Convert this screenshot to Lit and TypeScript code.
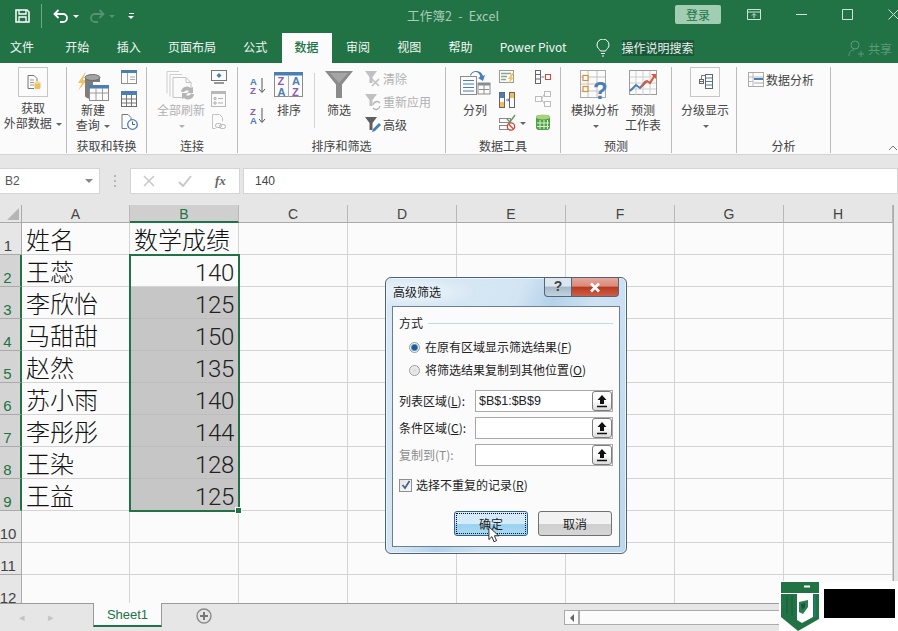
import { LitElement, html, css, nothing, TemplateResult } from 'lit';
import { customElement } from 'lit/decorators.js';

const G = '#217346';
const B = '#4a7fb5';
const P = '#8a5bb0';

// ribbon + chrome icons
const icons = {
  external: html`<svg class="ic" width="30" height="30" viewBox="0 0 30 30" fill="none">
    <rect x=".5" y=".5" width="29" height="29" fill="#fbfbfb" stroke="#c6c6c6" />
    <path d="M10 8.500h6l3 3v3M10 8.500v13h6" stroke="#777" />
    <path d="M12 13h4M12 15.500h4M12 18h4" stroke="#999" />
    <rect x="16.500" y="15" width="6" height="7" rx="1.500" fill="#edc05f" />
    <ellipse cx="19.500" cy="15.500" rx="3" ry="1.200" fill="#f6dc9c" />
  </svg>`,
  query: html`<svg class="ic" width="34" height="34" viewBox="0 0 34 34" fill="none">
    <path d="M10 1 2 13h4l-4 8 9-11H7z" fill="#f1c265" />
    <path d="M9 8v18c0 1.500 3 3 8 3V12h7V8z" fill="#7d7d7d" />
    <ellipse cx="16.500" cy="7.500" rx="7.500" ry="3" fill="#a3a3a3" stroke="#6b6b6b" />
    <rect x="13.500" y="15.500" width="19" height="15" fill="#fbfbfb" stroke="#8c8c8c" />
    <rect x="13" y="15" width="20" height="3.500" fill="${B}" />
    <path d="M20 18v12M26.500 18v12M14 23h18" stroke="#9c9c9c" />
  </svg>`,
  tableA: html`<svg class="ic" width="16" height="14" viewBox="0 0 16 14" fill="none">
    <rect x=".5" y=".5" width="15" height="13" fill="#fbfbfb" stroke="#8c8c8c" />
    <rect width="16" height="3" fill="${B}" />
    <path d="M6.500 3v10M9 7h5M9 9.500h5" stroke="#a8a8a8" />
  </svg>`,
  tableB: html`<svg class="ic" width="16" height="16" viewBox="0 0 16 16" fill="none">
    <rect x=".5" y=".5" width="15" height="15" fill="#fbfbfb" stroke="#6a6a6a" />
    <rect width="16" height="4" fill="${B}" />
    <path d="M5.500 4v11M10.500 4v11M1 8h14M1 12h14" stroke="#777" />
  </svg>`,
  recent: html`<svg class="ic" width="17" height="16" viewBox="0 0 17 16" fill="none">
    <path d="M1 .5h6l3 3v3M1 .5v14h5" stroke="#777" />
    <circle cx="11.500" cy="10.500" r="4.800" fill="#fff" stroke="${B}" stroke-width="1.300" />
    <path d="M11.500 7.500v3h2.500" stroke="#555" />
  </svg>`,
  refresh: html`<svg class="ic" width="30" height="32" viewBox="0 0 30 32" fill="none">
    <path d="M1 1.500h12M1 1.500v22M4 4.500h12M4 4.500v22" stroke="#cfcfcf" />
    <path d="M7 7.500h13l5 5v15H7z" fill="#fbfbfb" stroke="#c4c4c4" />
    <path d="M20 7.500v5h5" stroke="#c4c4c4" />
    <path d="M15 22a6 6 0 0 1 10-4l2-1v6h-6l2-2a3.500 3.500 0 0 0-5 1zM28 24a6 6 0 0 1-10 4l-2 1v-6h6l-2 2a3.500 3.500 0 0 0 5-1z" fill="#b5b5b5" />
  </svg>`,
  conn: html`<svg class="ic" width="16" height="14" viewBox="0 0 16 14" fill="none">
    <rect x=".5" y=".5" width="15" height="10" fill="#fbfbfb" stroke="#777" />
    <path d="M3 13h10" stroke="#777" stroke-width="1.500" />
    <path d="M8 3l2.500 2.500L8 8 5.500 5.500z" fill="${B}" />
  </svg>`,
  props: html`<svg class="ic" width="15" height="16" viewBox="0 0 15 16" fill="none">
    <rect x=".5" y=".5" width="14" height="15" fill="#fbfbfb" stroke="#b8b8b8" />
    <rect width="15" height="3" fill="#b8b8b8" />
    <path d="M3 6.500h2v2H3zM3 11h2v2H3zM7 7.500h5M7 12h5" stroke="#b0b0b0" />
  </svg>`,
  links: html`<svg class="ic" width="15" height="16" viewBox="0 0 15 16" fill="none">
    <path d="M1.500.5h7l3 3v4M1.500.5v14h3" stroke="#c4c4c4" />
    <rect x="4.500" y="9.500" width="6" height="4" rx="2" stroke="#b5b5b5" />
    <rect x="8.500" y="10.500" width="6" height="4" rx="2" stroke="#b5b5b5" />
  </svg>`,
  sortAZ: html`<svg class="ic" width="16" height="17" viewBox="0 0 16 17" fill="none">
    <text x="0" y="8" class="az" fill="${B}">A</text>
    <text x="0" y="16.500" class="az" fill="${P}">Z</text>
    <path d="M12 1v14M9 12l3 3.500 3-3.500" stroke="#555" />
  </svg>`,
  sortZA: html`<svg class="ic" width="16" height="17" viewBox="0 0 16 17" fill="none">
    <text x="0" y="8" class="az" fill="${P}">Z</text>
    <text x="0" y="16.500" class="az" fill="${B}">A</text>
    <path d="M12 1v14M9 12l3 3.500 3-3.500" stroke="#555" />
  </svg>`,
  sort: html`<svg class="ic" width="30" height="26" viewBox="0 0 30 26" fill="none">
    <rect x=".5" y=".5" width="28" height="24" fill="#fbfbfb" stroke="#8c8c8c" />
    <rect width="29" height="3.500" fill="${B}" />
    <path d="M14.500 3v22" stroke="#aaa" />
    <text x="3.500" y="13" class="az2" fill="${P}">Z</text>
    <text x="3.500" y="24" class="az2" fill="${B}">A</text>
    <text x="18" y="13" class="az2" fill="${B}">A</text>
    <text x="18" y="24" class="az2" fill="${P}">Z</text>
  </svg>`,
  funnel: html`<svg class="ic" width="28" height="28" viewBox="0 0 28 28" fill="none">
    <path d="M0 0h28L17 13.500V27h-6V13.500z" fill="#8b8b8b" />
    <path d="M5 2h18l-9 10z" fill="#a5a5a5" />
  </svg>`,
  clear: html`<svg class="ic" width="16" height="16" viewBox="0 0 16 16" fill="none">
    <path d="M0 0h12L7.500 6v6h-3V6z" fill="#c0c0c0" />
    <path d="M7 8l7 7M14 8l-7 7" stroke="#c0c0c0" stroke-width="1.600" />
  </svg>`,
  reapply: html`<svg class="ic" width="16" height="16" viewBox="0 0 16 16" fill="none">
    <path d="M0 0h12L7.500 6v6h-3V6z" fill="#c0c0c0" />
    <path d="M8 11a4 4 0 0 1 7-2M15 12a4 4 0 0 1-7 2" stroke="#b5b5b5" stroke-width="1.400" />
  </svg>`,
  advanced: html`<svg class="ic" width="16" height="16" viewBox="0 0 16 16" fill="none">
    <path d="M0 0h12L7.500 6v7h-3V6z" fill="#5f5f5f" />
    <path d="M7 15l1-3 6-6 2 2-6 6z" fill="${B}" />
  </svg>`,
  split: html`<svg class="ic" width="30" height="26" viewBox="0 0 30 26" fill="none">
    <rect x=".5" y="6.500" width="16" height="18" fill="#fbfbfb" stroke="#8c8c8c" />
    <path d="M3 10.500h11M3 14h11M3 17.500h11M3 21h11" stroke="${B}" />
    <rect x="18" y="13" width="12" height="11" fill="#fbfbfb" stroke="#8c8c8c" />
    <rect x="18" y="13" width="12" height="2.500" fill="#8c8c8c" />
    <path d="M24 15v9M19 19.500h10" stroke="#8c8c8c" />
    <path d="M10 5a7 7 0 0 1 13 1l2-1-2 6-5-3 2-1a4.500 4.500 0 0 0-9-1z" fill="${B}" />
  </svg>`,
  flash: html`<svg class="ic" width="16" height="15" viewBox="0 0 16 15" fill="none">
    <rect x=".5" y=".5" width="14" height="12" fill="#fbfbfb" stroke="#999" />
    <path d="M2 3.500h10M2 6.500h6M2 9.500h5" stroke="#8ca88a" stroke-width="1.400" />
    <path d="M13 3l-4 6h2.500L9 14l6-6.500h-2.500L15 3z" fill="#f1c265" />
  </svg>`,
  dup: html`<svg class="ic" width="16" height="16" viewBox="0 0 16 16" fill="none">
    <rect x=".5" y=".5" width="5" height="15" fill="#fbfbfb" stroke="#666" />
    <rect x="1" y="1" width="4" height="5" fill="${B}" />
    <rect x="1" y="10" width="4" height="5" fill="#efbe5b" />
    <rect x="10.500" y=".5" width="5" height="15" fill="#fbfbfb" stroke="#666" />
    <rect x="11" y="1" width="4" height="5" fill="#efbe5b" />
    <path d="M7 8h3M9 6.500 10 8 9 9.500" stroke="${B}" />
  </svg>`,
  valid: html`<svg class="ic" width="17" height="16" viewBox="0 0 17 16" fill="none">
    <rect x=".5" y="3.500" width="11" height="4" fill="#fbfbfb" stroke="#888" />
    <rect x=".5" y="10.500" width="8" height="4" fill="#fbfbfb" stroke="#888" />
    <path d="M8 4l3 3 5-7" stroke="#5a9e5e" stroke-width="1.400" />
    <circle cx="12" cy="11.500" r="3.700" fill="#fff" stroke="#d0483a" stroke-width="1.300" />
    <path d="M9.500 9l5 5" stroke="#d0483a" stroke-width="1.300" />
  </svg>`,
  consol: html`<svg class="ic" width="16" height="14" viewBox="0 0 16 14" fill="none">
    <rect x=".5" y=".5" width="5" height="13" fill="#fbfbfb" stroke="#666" />
    <path d="M1 4.500h4M1 9h4" stroke="#666" />
    <path d="M6.500 7h3" stroke="${B}" />
    <rect x="10.500" y="4.500" width="5" height="5" stroke="#d0483a" />
  </svg>`,
  rel: html`<svg class="ic" width="16" height="16" viewBox="0 0 16 16" fill="none">
    <rect x=".5" y="5.500" width="6" height="5" stroke="#bcbcbc" />
    <rect x="9.500" y=".5" width="6" height="5" stroke="#bcbcbc" />
    <rect x="9.500" y="10.500" width="6" height="5" stroke="#bcbcbc" />
    <path d="M6.500 8 9.500 3M6.500 8l3 5" stroke="#bcbcbc" />
  </svg>`,
  pivot: html`<svg class="ic" width="16" height="16" viewBox="0 0 16 16" fill="none">
    <rect x="1" y="1" width="14" height="15" rx="3" fill="#4fa24b" />
    <ellipse cx="8" cy="3" rx="7" ry="2.500" fill="#a7d37f" />
    <path d="M5 6v9M9 6v9M12.500 6v9M2 9h12M2 12.500h12" stroke="#dff0cf" />
  </svg>`,
  whatif: html`<svg class="ic" width="30" height="30" viewBox="0 0 30 30" fill="none">
    <rect x=".5" y=".5" width="25" height="27" fill="#fbfbfb" stroke="#aaa" />
    <path d="M8 1v26M17 1v26M1 7h24M1 14h24M1 21h24" stroke="#c2c2c2" />
    <rect x="3" y="5.500" width="5" height="5" fill="#fff" stroke="#e08a33" stroke-width="1.200" />
    <rect x="3" y="16.500" width="5" height="5" fill="#fff" stroke="#e08a33" stroke-width="1.200" />
    <text x="13" y="29" class="qm" fill="${B}">?</text>
  </svg>`,
  forecast: html`<svg class="ic" width="28" height="28" viewBox="0 0 28 28" fill="none">
    <rect x=".5" y=".5" width="27" height="24" fill="#fbfbfb" stroke="#9c9c9c" />
    <path d="M7 1v24M14 1v24M21 1v24M1 7h26M1 13h26M1 19h26" stroke="#cfcfcf" />
    <path d="M1 21l6-6 4 3 6-7" stroke="${B}" stroke-width="2" />
    <path d="M12 17l6-6 3 2 5-8" stroke="#d8573f" stroke-width="2" />
    <path d="M22 4h5v5z" fill="#d8573f" />
  </svg>`,
  outline: html`<svg class="ic" width="30" height="30" viewBox="0 0 30 30" fill="none">
    <rect x=".5" y=".5" width="29" height="29" fill="#fbfbfb" stroke="#c6c6c6" />
    <rect x="9.500" y="12.500" width="4" height="4" stroke="#666" />
    <path d="M10 14.500h3" stroke="#666" />
    <rect x="15.500" y="7.500" width="7" height="14" fill="#fbfbfb" stroke="#666" />
    <path d="M16 11h6M16 14.500h6M16 18h6" stroke="${B}" />
    <path d="M11.500 8.500h4M11.500 8.500v4" stroke="#777" />
  </svg>`,
  analysis: html`<svg class="ic" width="16" height="15" viewBox="0 0 16 15" fill="none">
    <rect x=".5" y=".5" width="15" height="14" fill="#fbfbfb" stroke="#aaa" />
    <path d="M5 1v13M1 5h14M1 9.500h4" stroke="#bbb" />
    <rect x="6" y="6" width="9" height="2" fill="${B}" />
    <path d="M6 11h9" stroke="#aaa" />
  </svg>`,
};

const tabs = ['开始', '插入', '页面布局', '公式', '数据', '审阅', '视图', '帮助', 'Power Pivot'];
const columns = ['A', 'B', 'C', 'D', 'E', 'F', 'G', 'H'];
const people: [string, string][] = [
  ['姓名', '数学成绩'],
  ['王蕊', '140'],
  ['李欣怡', '125'],
  ['马甜甜', '150'],
  ['赵然', '135'],
  ['苏小雨', '140'],
  ['李彤彤', '144'],
  ['王染', '128'],
  ['王益', '125'],
];

@customElement('app-root')
export class AppRoot extends LitElement {
  big(icon: TemplateResult, lines: TemplateResult | string, cls = '') {
    return html`<div class="big ${cls}">
      <div class="big-ic">${icon}</div>
      <div class="big-txt">${lines}</div>
    </div>`;
  }

  renderRibbon() {
    const caret = html`<span class="caret"></span>`;
    return html`<div class="ribbon">
      <div class="grp g1">
        <div class="body">
          ${this.big(icons.external, html`获取<br />外部数据 ${caret}`, 'w66')}
        </div>
      </div>
      <div class="grp g2">
        <div class="body">
          ${this.big(icons.query, html`新建<br />查询 ${caret}`, 'w36')}
          <div class="col">${icons.tableA}${icons.tableB}${icons.recent}</div>
        </div>
        <div class="cap">获取和转换</div>
      </div>
      <div class="grp g3 off">
        <div class="body">
          ${this.big(icons.refresh, html`全部刷新<br />${caret}`, 'w60')}
          <div class="col">${icons.conn}${icons.props}${icons.links}</div>
        </div>
        <div class="cap on">连接</div>
      </div>
      <div class="grp g4">
        <div class="body">
          <div class="col az-col">${icons.sortAZ}${icons.sortZA}</div>
          ${this.big(icons.sort, '排序', 'w30')}
          <div class="vsep"></div>
          ${this.big(icons.funnel, '筛选', 'w30')}
          <div class="rows">
            <div class="row off">${icons.clear}<span>清除</span></div>
            <div class="row off">${icons.reapply}<span>重新应用</span></div>
            <div class="row">${icons.advanced}<span>高级</span></div>
          </div>
        </div>
        <div class="cap">排序和筛选</div>
      </div>
      <div class="grp g5">
        <div class="body">
          ${this.big(icons.split, '分列', 'w36')}
          <div class="col">
            ${icons.flash}${icons.dup}
            <div class="with-caret">${icons.valid}${caret}</div>
          </div>
          <div class="col col-b">${icons.consol}${icons.rel}${icons.pivot}</div>
        </div>
        <div class="cap">数据工具</div>
      </div>
      <div class="grp g6">
        <div class="body">
          ${this.big(icons.whatif, html`模拟分析<br />${caret}`, 'w50')}
          ${this.big(icons.forecast, html`预测<br />工作表`, 'w38')}
        </div>
        <div class="cap">预测</div>
      </div>
      <div class="grp g7">
        <div class="body">${this.big(icons.outline, html`分级显示<br />${caret}`, 'w48')}</div>
      </div>
      <div class="grp g8">
        <div class="body"><div class="row top-row">${icons.analysis}<span>数据分析</span></div></div>
        <div class="cap">分析</div>
      </div>
      <svg class="collapse" width="8" height="5" viewBox="0 0 8 5"><path d="M0 5l4-4 4 4" stroke="#777" fill="none" /></svg>
    </div>`;
  }

  renderSheet() {
    const rows = [];
    for (let r = 1; r <= 12; r++) {
      const data = people[r - 1];
      const sel = r >= 2 && r <= 9;
      rows.push(html`<div class="rh ${sel ? 'rh-sel' : ''}"><span>${r}</span></div>`);
      columns.forEach((_, c) => {
        const filled = c === 1 && r >= 3 && r <= 9;
        const num = c === 1 && r > 1;
        rows.push(html`<div class="cell ${filled ? 'filled' : ''} ${num ? 'num' : ''}">
          ${data && c < 2 ? data[c] : nothing}
        </div>`);
      });
    }
    return html`<div class="sheet">
      <div class="grid">
        <div class="corner"><i></i></div>
        ${columns.map((c, i) => html`<div class="ch ${i === 1 ? 'ch-sel' : ''}">${c}</div>`)}
        ${rows}
        <div class="selection"><i></i></div>
      </div>
      <div class="vscroll"></div>
    </div>`;
  }

  renderDialog() {
    const field = (label: TemplateResult, value = '', off = false) => html`<div class="field ${off ? 'dim' : ''}">
      <label>${label}</label>
      <div class="input">
        <span>${value}</span>
        <button class="ref">
          <svg width="12" height="14" viewBox="0 0 12 14"><path d="M6 1 1.500 6H4v4h4V6h2.500z" fill="#111" /><path d="M1 12.500h10" stroke="#111" stroke-width="1.500" /></svg>
        </button>
      </div>
    </div>`;
    return html`<div class="dlg">
      <div class="dlg-title">
        <span>高级筛选</span>
        <div class="dlg-ctl">
          <div class="help">?</div>
          <div class="close">
            <svg width="14" height="11" viewBox="0 0 14 11"><path d="M3 1.500l8 8M11 1.500l-8 8" stroke="#fff" stroke-width="2.600" /></svg>
          </div>
        </div>
      </div>
      <div class="dlg-body">
        <div class="legend"><span>方式</span><i></i></div>
        <div class="radio"><b class="dot on-dot"></b>在原有区域显示筛选结果(<u>F</u>)</div>
        <div class="radio r2"><b class="dot"></b>将筛选结果复制到其他位置(<u>O</u>)</div>
        <div class="fields">
          ${field(html`列表区域(<u>L</u>):`, '$B$1:$B$9')}
          ${field(html`条件区域(<u>C</u>):`)}
          ${field(html`复制到(T):`, '', true)}
        </div>
        <div class="check">
          <b class="box">
            <svg width="10" height="10" viewBox="0 0 10 10"><path d="M1.500 5l2.500 3 4.500-7" stroke="#3f5f8f" stroke-width="1.700" fill="none" /></svg>
          </b>
          选择不重复的记录(<u>R</u>)
        </div>
        <div class="actions">
          <button class="btn primary"><span>确定</span></button>
          <button class="btn"><span>取消</span></button>
        </div>
      </div>
      <svg class="cursor" width="12" height="17" viewBox="0 0 14 20">
        <path d="M1 1v15l3.500-3.500 2.500 6 3-1.300-2.500-5.700h5z" fill="#fff" stroke="#111" />
      </svg>
    </div>`;
  }

  render() {
    return html`<div class="app">
      <header class="title">
        <div class="qat">
          <svg width="15" height="14" viewBox="0 0 15 14" fill="none">
            <path d="M1 1h11l2 2v10H1z" stroke="#fff" stroke-width="1.500" />
            <path d="M4 1v4h7V1M4 13V8h7v5" stroke="#fff" stroke-width="1.300" />
          </svg>
          <i class="qsep"></i>
          <svg width="16" height="14" viewBox="0 0 16 14" fill="none">
            <path d="M2 5h8a4 4 0 0 1 0 8H7M5.500 1 1.500 5l4 4" stroke="#fff" stroke-width="1.800" />
          </svg>
          <span class="tc"></span>
          <svg class="redo" width="16" height="14" viewBox="0 0 16 14" fill="none">
            <path d="M14 5H6a4 4 0 0 0 0 8h3M10.500 1l4 4-4 4" stroke="#55926f" stroke-width="1.800" />
          </svg>
          <span class="tc dim"></span>
          <span class="custom"><i></i><span class="tc"></span></span>
        </div>
        <div class="doc">工作簿2&nbsp; -&nbsp; Excel</div>
        <button class="login">登录</button>
        <div class="win">
          <svg width="14" height="12" viewBox="0 0 14 12" fill="none">
            <path d="M.5.500h13v10H.5zM.5 3h13M7 9V5M5 6.500 7 4.500l2 2" stroke="#cfe3d7" />
          </svg>
          <svg width="11" height="11" viewBox="0 0 11 11" fill="none"><path d="M0 5.500h11" stroke="#cfe3d7" /></svg>
          <svg width="11" height="11" viewBox="0 0 11 11" fill="none"><path d="M.5.500h10v10H.5z" stroke="#cfe3d7" /></svg>
          <svg width="11" height="11" viewBox="0 0 11 11" fill="none"><path d="M.5.500l10 10M10.500.500l-10 10" stroke="#cfe3d7" /></svg>
        </div>
      </header>
      <nav class="tabs">
        <div class="tab file">文件</div>
        ${tabs.map((t) => html`<div class="tab ${t === '数据' ? 'active' : ''}">${t}</div>`)}
        <svg class="bulb" width="14" height="18" viewBox="0 0 14 18" fill="none">
          <path d="M4.500 12C3.500 10 1 9 1 6a6 6 0 0 1 12 0c0 3-2.500 4-3.500 6zM5 14.500h4M6 17h2" stroke="#fff" />
        </svg>
        <div class="search">操作说明搜索</div>
        <div class="share">
          <svg width="16" height="17" viewBox="0 0 16 17" fill="none">
            <circle cx="7" cy="5" r="4" stroke="#5d9a78" />
            <path d="M1 16c0-4 2-6 5-6M10 14h6M13 11v6" stroke="#5d9a78" />
          </svg>
          共享
        </div>
      </nav>
      ${this.renderRibbon()}
      <div class="fbar">
        <div class="namebox"><span>B2</span><i class="nb-caret"></i></div>
        <div class="grip"><i></i></div>
        <div class="fx-btns">
          <svg width="12" height="12" viewBox="0 0 12 12" fill="none"><path d="M1 1l10 10M11 1 1 11" stroke="#c8c8c8" stroke-width="1.500" /></svg>
          <svg width="14" height="12" viewBox="0 0 14 12" fill="none"><path d="M1 7l4 4 8-10" stroke="#c8c8c8" stroke-width="2" /></svg>
          <span class="fx">fx</span>
        </div>
        <div class="formula">140</div>
      </div>
      ${this.renderSheet()}
      <footer class="status">
        <span class="nav">◂</span><span class="nav n2">▸</span>
        <div class="stab">Sheet1</div>
        <div class="plus">
          <svg width="16" height="16" viewBox="0 0 16 16" fill="none">
            <circle cx="8" cy="8" r="7" stroke="#8a8a8a" stroke-width="1.400" />
            <path d="M8 4v8M4 8h8" stroke="#777" stroke-width="2" />
          </svg>
        </div>
        <div class="hscroll"><div class="harrow"><i></i></div></div>
      </footer>
      ${this.renderDialog()}
      <div class="mark">
        <svg width="38" height="49" viewBox="0 0 38 49">
          <path d="M0 0h38v11H0z" fill="${G}" />
          <path d="M23 3.500h6v2h-6z" fill="#fff" />
          <path d="M0 12h38v25L17 49 0 35z" fill="${G}" />
          <path d="M6 14v18M11 14v20" stroke="#1a5c38" />
          <path d="M16 12h16v23l-11 6-5-3z" fill="#fff" />
          <path d="M18 20l9-2v7l-5 7-4-2z" fill="#2a7f52" />
          <path d="M20 22l4-1v4l-3 3z" fill="#17563a" />
          <path d="M33 13h1.500v22H33z" fill="#16856f" />
        </svg>
        <div class="mark-box"></div>
      </div>
    </div>`;
  }

  static styles = css`
    :host {
      --g: #217346;
      display: block;
      width: 898px;
      height: 631px;
      overflow: hidden;
      font-family: 'Noto Sans CJK SC', 'Liberation Sans', sans-serif;
      font-size: 12px;
      color: #444;
    }
    .app {
      position: relative;
      width: 898px;
      height: 631px;
      overflow: hidden;
      display: flex;
      flex-direction: column;
      background: #e6e6e6;
    }
    svg {
      display: block;
      flex: none;
    }
    .ic {
      overflow: visible;
    }
    .az {
      font: 700 9.5px 'Liberation Sans', sans-serif;
    }
    .az2 {
      font: 700 11px 'Liberation Sans', sans-serif;
    }
    .qm {
      font: 700 24px 'Liberation Sans', sans-serif;
    }

    /* title bar */
    .title {
      height: 32px;
      background: var(--g);
      display: flex;
      align-items: center;
      flex: none;
    }
    .qat {
      display: flex;
      align-items: center;
      padding-left: 15px;
      width: 385px;
      flex: none;
      box-sizing: border-box;
    }
    .qsep {
      width: 1px;
      height: 24px;
      background: #6fa588;
      margin: 0 11px;
    }
    .tc {
      width: 0;
      height: 0;
      border: 3px solid transparent;
      border-top: 3px solid #fff;
      border-bottom: 0;
      margin-left: 4px;
    }
    .tc.dim {
      border-top-color: #55926f;
    }
    .redo {
      margin-left: 10px;
    }
    .custom {
      display: flex;
      flex-direction: column;
      align-items: center;
      gap: 2px;
      margin-left: 13px;
    }
    .custom i {
      width: 5px;
      height: 1px;
      background: #fff;
    }
    .custom .tc {
      margin: 0;
    }
    .doc {
      width: 290px;
      flex: none;
      padding-left: 22px;
      margin-top: -2px;
      box-sizing: border-box;
      color: #a9cbb8;
      font-size: 12.5px;
      letter-spacing: 0.2px;
      white-space: nowrap;
    }
    .login {
      width: 46px;
      height: 19px;
      flex: none;
      margin-top: -3px;
      padding: 0;
      border: 0;
      border-radius: 2px;
      background: #a1ceb3;
      color: var(--g);
      font: 12px 'Noto Sans CJK SC', sans-serif;
    }
    .win {
      display: flex;
      align-items: center;
      margin-left: 26px;
      gap: 35px;
      margin-top: -3px;
    }

    /* tabs */
    .tabs {
      height: 31px;
      background: var(--g);
      display: flex;
      align-items: stretch;
      gap: 1px;
      color: #f1f6f3;
      flex: none;
    }
    .tab {
      padding: 3px 13px 0;
      line-height: 24px;
      white-space: nowrap;
    }
    .tab.file {
      padding: 3px 17px 0 10px;
    }
    .tab.active {
      margin-top: 1px;
      padding: 2px 13px 0;
      background: #fbfbfb;
      color: var(--g);
      font-weight: 500;
    }
    .tab + .tab {
      margin-left: 0.3px;
    }
    .bulb {
      margin: 7px 11px 0 15px;
    }
    .search {
      align-self: flex-start;
      margin-top: 8px;
      background: #19593a;
      color: #e8f1ec;
      line-height: 16px;
      white-space: nowrap;
    }
    .share {
      display: flex;
      align-items: center;
      gap: 4px;
      margin-left: auto;
      padding: 2px 6px 0 0;
      color: #5d9a78;
    }

    /* ribbon */
    .ribbon {
      height: 92px;
      flex: none;
      box-sizing: border-box;
      background: #fbfbfb;
      border-bottom: 1px solid #d4d4d4;
      display: flex;
      padding-top: 4px;
      line-height: 15px;
      position: relative;
    }
    .collapse {
      position: absolute;
      right: 1px;
      bottom: 4px;
    }
    .grp {
      height: 86px;
      box-sizing: border-box;
      border-right: 1px solid #bcbcbc;
      display: flex;
      flex-direction: column;
      flex: none;
    }
    .g1 {
      width: 67px;
    }
    .g2 {
      width: 80px;
    }
    .g3 {
      width: 91px;
    }
    .g4 {
      width: 208px;
    }
    .g5 {
      width: 115px;
    }
    .g6 {
      width: 111px;
    }
    .g7 {
      width: 65px;
    }
    .g8 {
      width: 94px;
    }
    .body {
      height: 71px;
      display: flex;
      flex: none;
      white-space: nowrap;
    }
    .cap {
      text-align: center;
      line-height: 15px;
    }
    .big {
      display: flex;
      flex-direction: column;
      align-items: center;
      flex: none;
    }
    .big-ic {
      height: 35px;
      display: flex;
      align-items: flex-start;
    }
    .g1 .big-ic {
      height: 33px;
    }
    .big-txt {
      text-align: center;
    }
    .w66 {
      width: 66px;
    }
    .w36 {
      width: 36px;
    }
    .w60 {
      width: 60px;
    }
    .w30 {
      width: 30px;
    }
    .w50 {
      width: 50px;
    }
    .w38 {
      width: 38px;
    }
    .w48 {
      width: 48px;
    }
    .g2 .big {
      margin-left: 8px;
    }
    .g2 .big-ic svg,
    .g3 .big-ic svg,
    .g5 .big-ic svg,
    .g6 .big-ic svg {
      margin-top: 3px;
    }
    .g3 .big {
      margin-left: 4px;
    }
    .col {
      display: flex;
      flex-direction: column;
      gap: 7px;
      padding-top: 3px;
    }
    .g2 .col {
      margin-left: 10px;
    }
    .az-col {
      margin-left: 12px;
      padding-top: 10px;
      gap: 13px;
    }
    .g4 .big {
      margin-left: 8px;
    }
    .g4 .big-ic svg {
      margin-top: 5px;
    }
    .vsep {
      width: 1px;
      height: 55px;
      margin: 6px 0 0 10px;
      background: #d4d4d4;
    }
    .g4 .vsep + .big {
      margin-left: 9px;
    }
    .g4 .vsep + .big .big-ic svg {
      margin-top: 4px;
    }
    .rows {
      display: flex;
      flex-direction: column;
      margin: 3px 0 0 11px;
      gap: 6px;
    }
    .row {
      display: flex;
      align-items: center;
      gap: 2px;
      height: 17px;
    }
    .off,
    .off .big-txt {
      color: #b1b1b1;
    }
    .on {
      color: #444;
    }
    .caret {
      display: inline-block;
      vertical-align: middle;
      width: 0;
      height: 0;
      border: 3px solid transparent;
      border-top: 3px solid #666;
      border-bottom: 0;
      margin-left: 2px;
    }
    .off .caret {
      border-top-color: #b1b1b1;
    }
    .g5 .big {
      margin-left: 11px;
    }
    .g5 .col {
      margin-left: 6px;
    }
    .g5 .col-b {
      margin-left: 9px;
    }
    .with-caret {
      display: flex;
      align-items: center;
      gap: 2px;
    }
    .g6 .big {
      margin-left: 9px;
    }
    .g6 .big + .big {
      margin-left: 4px;
    }
    .g7 .big {
      margin-left: 9px;
    }
    .top-row {
      margin: 4px 0 0 11px;
    }

    /* formula bar */
    .fbar {
      height: 26px;
      margin-top: 13px;
      display: flex;
      flex: none;
    }
    .namebox,
    .fx-btns,
    .formula {
      background: #fff;
      border: 1px solid #d4d4d4;
      box-sizing: border-box;
      display: flex;
      align-items: center;
    }
    .namebox {
      width: 100px;
      padding: 0 6px 0 5px;
      justify-content: space-between;
      color: #555;
      border-left: 0;
      font-family: 'Liberation Sans', sans-serif;
    }
    .nb-caret {
      border: 4px solid transparent;
      border-top: 4px solid #888;
      border-bottom: 0;
    }
    .grip {
      width: 30px;
      display: flex;
      align-items: center;
      justify-content: center;
    }
    .grip i {
      width: 2px;
      height: 12px;
      background: repeating-linear-gradient(#b5b5b5 0 2px, transparent 2px 5px);
    }
    .fx-btns {
      width: 110px;
      gap: 23px;
      padding-left: 12px;
    }
    .fx {
      font: italic 700 13px 'Liberation Serif', serif;
      color: #666;
    }
    .formula {
      flex: 1;
      margin-left: 3px;
      padding-left: 11px;
      font-family: 'Liberation Sans', sans-serif;
      color: #444;
    }

    /* sheet */
    .sheet {
      margin-top: 11px;
      height: 398px;
      flex: none;
      overflow: hidden;
      display: flex;
      background: #fbfbfb;
    }
    .grid {
      display: grid;
      position: relative;
      grid-template-columns: 22px 108px repeat(7, 109px);
      grid-template-rows: 18px repeat(12, 32px);
      width: 893px;
      flex: none;
    }
    .corner {
      background: #e6e6e6;
      border-right: 1px solid #aaa;
      border-bottom: 1px solid #aaa;
      box-sizing: border-box;
      position: relative;
    }
    .corner i {
      position: absolute;
      right: 2px;
      bottom: 2px;
      border: 6px solid transparent;
      border-right-color: #b5b5b5;
      border-bottom-color: #b5b5b5;
    }
    .ch {
      background: #e6e6e6;
      border-right: 1px solid #b8b8b8;
      border-bottom: 1px solid #aaa;
      box-sizing: border-box;
      text-align: center;
      font: 14px/19px 'Liberation Sans', sans-serif;
      color: #444;
    }
    .ch-sel {
      background: #cfcfcf;
      color: var(--g);
      border-bottom: 2px solid var(--g);
    }
    .rh {
      background: #e6e6e6;
      border-right: 1px solid #aaa;
      border-bottom: 1px solid #aaa;
      box-sizing: border-box;
      display: flex;
      align-items: flex-end;
      justify-content: center;
      padding-right: 5px;
      font: 15px/17px 'Liberation Sans', sans-serif;
      color: #444;
      overflow: hidden;
    }
    .rh-sel {
      background: #d4d4d4;
      color: var(--g);
      border-right: 2px solid var(--g);
    }
    .cell {
      border-right: 1px solid #d4d4d4;
      border-bottom: 1px solid #d4d4d4;
      box-sizing: border-box;
      padding: 0 4px;
      font: 300 24px/32px 'Noto Sans CJK SC', sans-serif;
      color: #111;
      white-space: nowrap;
      overflow: hidden;
    }
    .num {
      text-align: right;
      font: 300 24px/36px 'Roboto', 'Liberation Sans', sans-serif;
      letter-spacing: -0.3px;
      color: #222;
    }
    .filled {
      background: #c6c6c6;
      border-right-color: #c6c6c6;
      border-bottom-color: #bdbdbd;
    }
    .selection {
      grid-column: 3 / 4;
      grid-row: 3 / 11;
      position: absolute;
      inset: -1px;
      border: 2px solid var(--g);
      pointer-events: none;
    }
    .selection i {
      position: absolute;
      right: -4px;
      bottom: -4px;
      width: 5px;
      height: 5px;
      background: var(--g);
      border: 1px solid #fff;
    }
    .vscroll {
      flex: 1;
      background: #e6e6e6;
      border-left: 1px solid #aaa;
    }

    /* bottom bar */
    .status {
      flex: 1;
      display: flex;
      align-items: flex-start;
      background: #e6e6e6;
      border-top: 1px solid #9a9a9a;
      position: relative;
    }
    .nav {
      color: #c4c4c4;
      font-size: 11px;
      line-height: 24px;
      width: 29px;
      text-align: center;
    }
    .nav:first-child {
      margin-left: 7px;
    }
    .stab {
      margin: -1px 0 0 28px;
      width: 69px;
      height: 24px;
      box-sizing: border-box;
      background: #fbfbfb;
      border: 1px solid #9a9a9a;
      border-top: 0;
      border-bottom: 2px solid var(--g);
      color: var(--g);
      font: 13px/24px 'Liberation Sans', sans-serif;
      text-align: center;
    }
    .plus {
      margin: 4px 0 0 34px;
    }
    .hscroll {
      margin: 6px 0 0 352px;
      width: 320px;
      height: 15px;
      box-sizing: border-box;
      background: #fbfbfb;
      border: 1px solid #aaa;
      display: flex;
    }
    .harrow {
      width: 15px;
      border-right: 2px solid #aaa;
      box-sizing: border-box;
      display: flex;
      align-items: center;
      justify-content: center;
    }
    .harrow i {
      border: 4px solid transparent;
      border-right: 4px solid #666;
      border-left: 0;
    }

    /* dialog */
    .dlg {
      position: absolute;
      left: 385px;
      top: 277px;
      width: 242px;
      height: 277px;
      box-sizing: border-box;
      padding: 0 6px 6px;
      border: 1px solid #4f6276;
      border-radius: 6px;
      background: radial-gradient(ellipse 60px 14px at 30px 14px, #eef6fc, transparent),
        linear-gradient(115deg, #dbe9f5 0%, #d3e5f3 38%, #b4d2ea 48%, #cfe2f2 60%, #bcd6ec 100%);
      box-shadow: inset 0 0 0 1px #eaf3fb;
      display: flex;
      flex-direction: column;
      color: #222;
      line-height: 16px;
    }
    .dlg-title {
      height: 28px;
      flex: none;
      display: flex;
      justify-content: space-between;
      line-height: 27px;
      padding-left: 1px;
      color: #1a1a1a;
    }
    .dlg-ctl {
      display: flex;
      height: 19px;
      margin-right: 1px;
    }
    .help {
      width: 28px;
      box-sizing: border-box;
      border: 1px solid #52657a;
      border-top: 0;
      border-radius: 0 0 0 4px;
      background: linear-gradient(#dbe6ef 45%, #a5b8c9 50%, #c3d2de);
      text-align: center;
      font: 700 14px/17px 'Liberation Sans', sans-serif;
      color: #444;
    }
    .close {
      width: 47px;
      box-sizing: border-box;
      border: 1px solid #52657a;
      border-left: 0;
      border-top: 0;
      border-radius: 0 0 4px 0;
      background: linear-gradient(#e4a79b 0%, #d98a7a 45%, #b73a22 52%, #cf5f45);
      display: flex;
      align-items: center;
      justify-content: center;
    }
    .dlg-body {
      flex: 1;
      background: #fbfbfb;
      border: 1px solid #6b7f92;
      padding: 8px 6px 0 6px;
      display: flex;
      flex-direction: column;
    }
    .legend {
      display: flex;
      align-items: center;
      gap: 5px;
      height: 16px;
    }
    .legend i {
      flex: 1;
      height: 1px;
      background: #bcdcf0;
    }
    .radio {
      display: flex;
      align-items: center;
      margin: 8px 0 0 10px;
      height: 16px;
      white-space: nowrap;
    }
    .r2 {
      margin-top: 7px;
    }
    .dot {
      width: 11px;
      height: 11px;
      border-radius: 50%;
      border: 1px solid #9a9a9a;
      background: radial-gradient(#dcdcdc, #f5f5f5);
      margin-right: 5px;
      box-sizing: border-box;
      flex: none;
    }
    .on-dot {
      background: radial-gradient(circle, #1b5d99 0 35%, #8ab7dc 55%, #eee 62%);
    }
    .fields {
      display: flex;
      flex-direction: column;
      gap: 5px;
      margin-top: 12px;
    }
    .field {
      display: flex;
      align-items: center;
      height: 22px;
    }
    .field label {
      width: 76px;
      flex: none;
      white-space: nowrap;
    }
    .dim {
      color: #8b8b8b;
    }
    .input {
      flex: 1;
      height: 22px;
      box-sizing: border-box;
      background: #fff;
      border: 1px solid #a9a9a9;
      display: flex;
      align-items: center;
      justify-content: space-between;
      padding-left: 3px;
      color: #222;
      font-family: 'Liberation Sans', sans-serif;
      font-size: 12.5px;
    }
    .ref {
      width: 20px;
      height: 20px;
      padding: 0;
      border: 1px solid #7d7d7d;
      border-radius: 3px;
      background: linear-gradient(#fdfdfd 50%, #dcdcdc);
      display: flex;
      align-items: center;
      justify-content: center;
    }
    .check {
      display: flex;
      align-items: center;
      margin-top: 11px;
      height: 16px;
      white-space: nowrap;
    }
    .box {
      width: 13px;
      height: 13px;
      box-sizing: border-box;
      border: 1px solid #8e8f8f;
      background: linear-gradient(135deg, #e4e4e4, #fbfbfb);
      margin-right: 4px;
      display: flex;
      align-items: center;
      justify-content: center;
    }
    .actions {
      display: flex;
      justify-content: flex-end;
      gap: 10px;
      margin: 18px 1px 0 0;
    }
    .btn {
      width: 74px;
      height: 25px;
      padding: 0;
      border: 1px solid #707070;
      border-radius: 3px;
      background: linear-gradient(#f2f2f2 50%, #cfcfcf 52%, #d6d6d6);
      font: 12px/23px 'Noto Sans CJK SC', sans-serif;
      color: #222;
    }
    .primary {
      border-color: #2c628b;
      background: linear-gradient(#d5ebf9 50%, #9ad2f0 52%, #a9daf3);
    }
    .primary span {
      display: block;
      margin: 1px;
      outline: 1px dotted #111;
      outline-offset: -1px;
      height: 21px;
      line-height: 21px;
    }
    .cursor {
      position: absolute;
      left: 102px;
      top: 248px;
    }

    /* watermark */
    .mark {
      position: absolute;
      right: 0;
      bottom: 0;
      width: 119px;
      height: 50px;
      background: #fff;
      display: flex;
      padding-left: 2px;
      box-sizing: border-box;
    }
    .mark svg {
      margin-top: 1px;
    }
    .mark-box {
      width: 71px;
      height: 29px;
      background: #000;
      margin: 8px 0 0 5px;
    }
  `;
}
